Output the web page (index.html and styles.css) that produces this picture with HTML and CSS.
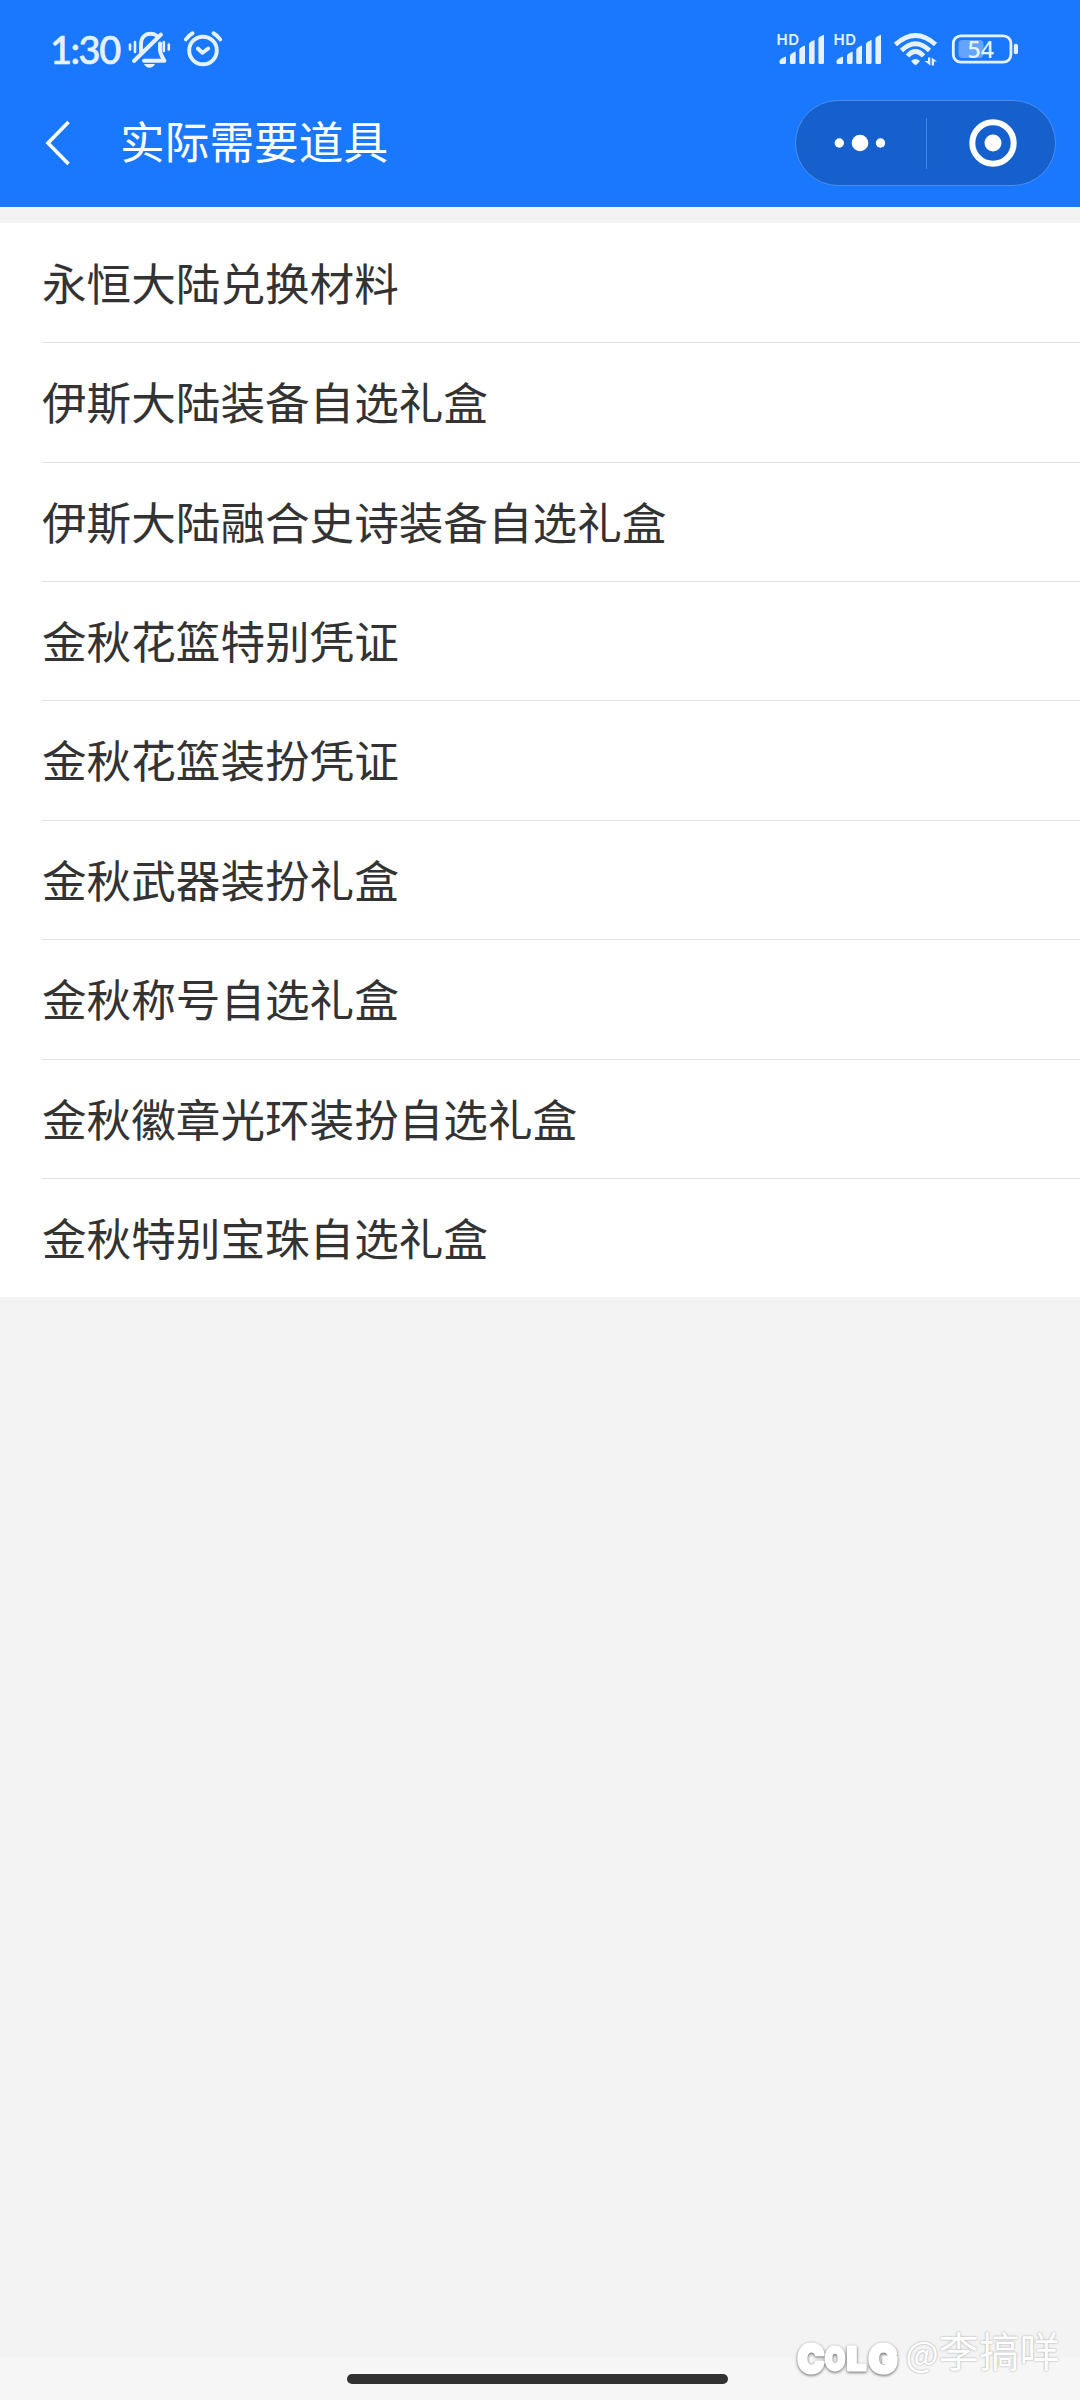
FILE: index.html
```html
<!DOCTYPE html>
<html lang="zh-CN">
<head>
<meta charset="utf-8">
<title>实际需要道具</title>
<link rel="stylesheet" href="styles.css">
</head>
<body>
<header class="header">
  <div class="status">
    <span class="clock">1:30</span>
    <svg class="status-left" width="96" height="44" viewBox="128 28 96 44">
      <g class="line">
        <path d="M141 53V44.5C141 37.5 145 33.8 150.500 33.800Q154 33.800 156.500 35.500M160 43.500V50.500Q160.500 54.500 164.500 60.800H144"/>
        <path d="M161 34.500L134 61"/>
        <path class="fine" d="M130 44.500V49.500M135 42V52M163.800 42V51M168.800 44.500V49.500"/>
        <circle cx="203" cy="50.500" r="13.800"/>
        <path d="M197.800 48.500L202.500 52.800L208.200 48.500M185.800 39.500Q188.500 35.500 192.500 33.300M213.500 33.300Q217.500 35.500 220.300 39.500"/>
      </g>
      <path class="solid" d="M144 64H155Q153 67.800 149.500 67.800T144 64Z"/>
    </svg>
    <svg class="status-right" width="244" height="40" viewBox="776 30 244 40">
      <defs>
        <g id="signal">
          <text class="hd" x="776.500" y="45" textLength="22.500">HD</text>
          <path class="solid" d="M779.500 61Q780 58.500 786 56.500V62.500Q786 64 784.500 64H781Q779.500 64 779.500 62.500ZM790 56Q790 53.500 795.700 51.500V62.500Q795.700 64 794.200 64H791.500Q790 64 790 62.500ZM799.300 50Q799.300 47.500 805 45.500V62.500Q805 64 803.500 64H800.800Q799.300 64 799.300 62.500ZM809 44Q809 42 814.600 40V62.500Q814.600 64 813.100 64H810.500Q809 64 809 62.500ZM818.400 39Q818.400 36.500 824 34.800V62.500Q824 64 822.500 64H819.900Q818.400 64 818.400 62.500Z"/>
        </g>
      </defs>
      <use href="#signal"/>
      <use href="#signal" x="57"/>
      <path class="wave" d="M895.500 44.500Q915.500 26.500 935.500 44.500M901.500 50.500Q915.500 37 929.500 50.500M907.500 56Q915.500 47 923.500 56"/>
      <path class="solid" d="M911 61Q915.500 56.800 920 61L917 64.300Q915.500 65.800 914 64.300ZM928 57.500H930.300V65.500L924.500 61H928ZM931.700 65.500V57.500L937 61.500H934V65.500Z"/>
      <rect class="level" x="958.500" y="40" width="25" height="18" rx="4"/>
      <rect class="cell" x="953.300" y="35.800" width="57.600" height="26.400" rx="7.500"/>
      <rect class="solid" x="1013.800" y="43.700" width="4.200" height="10.600" rx="2"/>
      <text class="percent" x="967.500" y="57.800">54</text>
    </svg>
  </div>
  <div class="nav">
    <svg class="back" width="26" height="46" viewBox="0 0 26 46"><path d="M23.500 2L3 23L23.500 44"/></svg>
    <h1 class="title">实际需要道具</h1>
    <div class="capsule">
      <svg class="more" width="52" height="18" viewBox="0 0 52 18"><circle cx="5.300" cy="9" r="4.700"/><circle cx="26" cy="9" r="8.300"/><circle cx="46.500" cy="9" r="4.700"/></svg>
      <i class="split"></i>
      <svg class="target" width="48" height="48" viewBox="0 0 48 48"><circle class="ring" cx="24" cy="24" r="20.700"/><circle cx="24" cy="24" r="8.500"/></svg>
    </div>
  </div>
</header>
<ul class="list">
  <li>永恒大陆兑换材料</li>
  <li>伊斯大陆装备自选礼盒</li>
  <li>伊斯大陆融合史诗装备自选礼盒</li>
  <li>金秋花篮特别凭证</li>
  <li>金秋花篮装扮凭证</li>
  <li>金秋武器装扮礼盒</li>
  <li>金秋称号自选礼盒</li>
  <li>金秋徽章光环装扮自选礼盒</li>
  <li>金秋特别宝珠自选礼盒</li>
</ul>
<footer class="gesture"><i></i></footer>
<div class="watermark">
  <svg class="colg" width="112" height="46" viewBox="0 0 112 46">
    <text class="big" x="8.500" y="39.500" textLength="27" lengthAdjust="spacingAndGlyphs">C</text>
    <text class="small" x="36" y="37" textLength="20" lengthAdjust="spacingAndGlyphs">O</text>
    <text class="small" x="58" y="37" textLength="19" lengthAdjust="spacingAndGlyphs">L</text>
    <text class="big" x="79.500" y="39.500" textLength="29" lengthAdjust="spacingAndGlyphs">G</text>
  </svg>
  <span class="author"><span class="at">@</span>李搞咩</span>
</div>
</body>
</html>
```

FILE: styles.css
```css
* { box-sizing: border-box; }
body {
  margin: 0;
  height: 2400px;
  display: flex;
  flex-direction: column;
  background: #f3f3f3;
  color: #333;
  font-family: "Noto Sans CJK SC", sans-serif;
  overflow: hidden;
}
svg { display: block; flex: none; }
.header {
  height: 207px;
  flex: none;
  background: #1a78ff;
  color: #fff;
}
.status {
  height: 100px;
  padding: 28px 60px 28px 50px;
  display: flex;
  align-items: flex-start;
  color: #e6f1ff;
}
.clock {
  width: 78px;
  font: 500 38px/42px Lato, sans-serif;
  letter-spacing: -1.5px;
  -webkit-text-stroke: .6px #e6f1ff;
}
.status-right { margin: 2px 0 0 auto; }
.line { fill: none; stroke: #e6f1ff; stroke-width: 3.9; stroke-linecap: round; stroke-linejoin: round; }
.fine { stroke-width: 2.6; }
.solid { fill: #e6f1ff; }
.hd { font: 600 15px Inter, sans-serif; fill: #e6f1ff; }
.wave { fill: none; stroke: #e6f1ff; stroke-width: 4.8; }
.level { fill: #64a4ff; }
.cell { fill: none; stroke: #e6f1ff; stroke-width: 2.8; }
.percent { font: 500 23px "Noto Sans", sans-serif; fill: #e6f1ff; }
.nav {
  height: 86px;
  padding: 0 24px 0 45px;
  display: flex;
  align-items: center;
}
.back { fill: none; stroke: #fff; stroke-width: 3.6; }
.title {
  margin: 0 0 0 49px;
  padding-bottom: 6px;
  font-size: 44.7px;
  line-height: 80px;
  font-weight: 400;
}
.capsule {
  width: 261px;
  height: 86px;
  margin-left: auto;
  padding: 0 38px;
  display: flex;
  align-items: center;
  justify-content: space-between;
  border: 1px solid #4b8eed;
  border-radius: 43px;
  background: #1560cc;
  fill: #fff;
}
.split { width: 1px; height: 51px; margin-right: 2px; background: #4b85d9; }
.ring { fill: none; stroke: #fff; stroke-width: 6; }
.list {
  margin: 16px 0 0;
  padding: 0 0 0 42px;
  list-style: none;
  background: #fff;
}
.list li {
  height: 119.36px;
  font-size: 44.6px;
  line-height: 117px;
}
.list li + li {
  border-top: 1px solid #e2e2e2;
  line-height: 116.5px;
}
.gesture {
  height: 43px;
  margin-top: auto;
  padding-top: 17px;
  background: #f6f6f6;
}
.gesture i {
  display: block;
  width: 381px;
  height: 10px;
  margin: 0 auto;
  border-radius: 5px;
  background: #313131;
  position: relative;
  left: -3px;
}
.watermark {
  position: absolute;
  right: 20px;
  bottom: 18px;
  display: flex;
  align-items: center;
}
.colg { margin-top: 10px; overflow: visible; filter: drop-shadow(0 1px 1.5px rgba(0, 0, 0, .6)); }
.colg text {
  font-family: Inter, sans-serif;
  font-weight: 900;
  fill: #fff;
  stroke: #fff;
  stroke-width: 3;
  stroke-linejoin: round;
}
.big { font-size: 40px; }
.small { font-size: 31px; }
.author {
  margin-left: 4px;
  font-size: 40.5px;
  line-height: 60px;
  color: #fff;
  text-shadow: 0 0 2px rgba(0, 0, 0, .4);
}
.at { font-size: 35px; }
```
